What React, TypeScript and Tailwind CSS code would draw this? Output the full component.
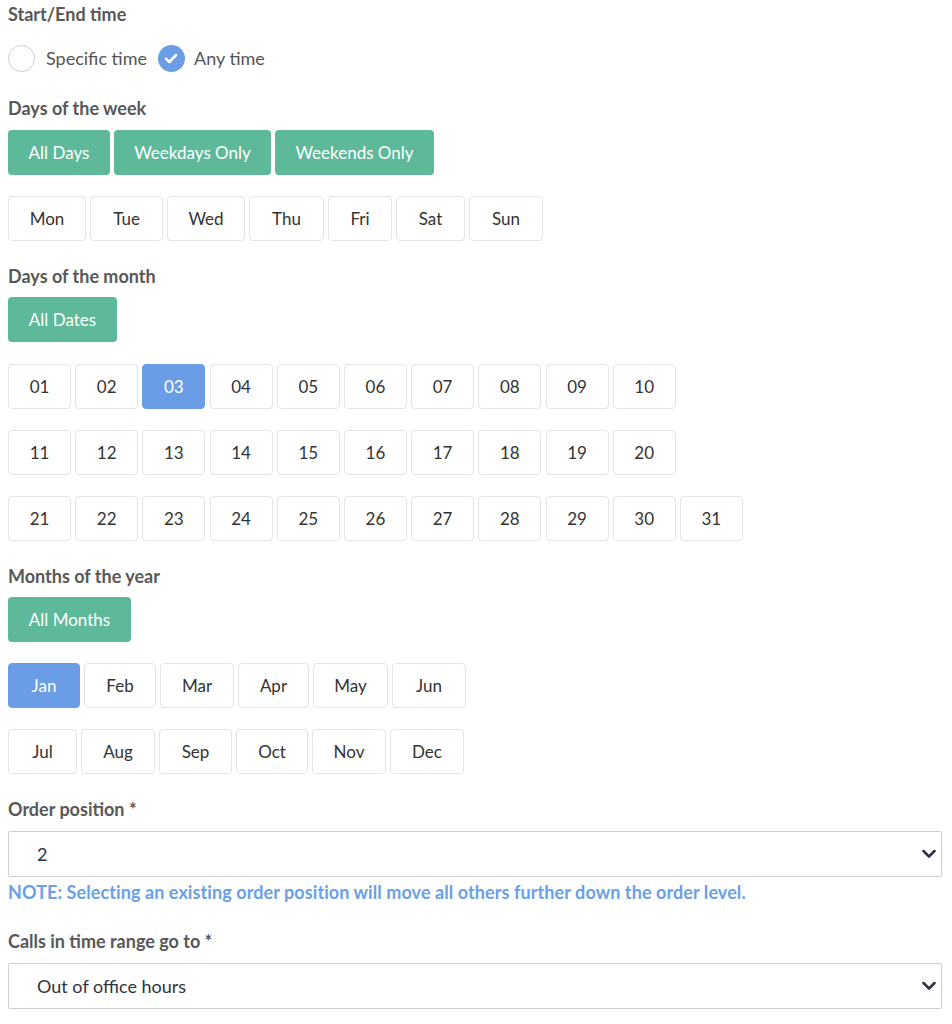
import React from "react";

const font = { fontFamily: '"Lato", "Noto Sans", sans-serif' };

function Label({ children, className = "" }: { children: React.ReactNode; className?: string }) {
  return (
    <div className={"h-6 leading-6 text-[18px] font-bold text-[#585858] whitespace-nowrap " + className}>
      {children}
    </div>
  );
}

function GreenBtn({ label, w }: { label: string; w: string }) {
  return (
    <div
      className={
        "h-[45px] flex items-center justify-center rounded-[4px] bg-[#5eb99a] text-white text-[17px] whitespace-nowrap " + w
      }
    >
      {label}
    </div>
  );
}

function Btn({ label, w, active = false }: { label: string; w: string; active?: boolean }) {
  return (
    <div
      className={
        "h-[45px] flex items-center justify-center rounded-[4px] border text-[17px] whitespace-nowrap " +
        w +
        (active
          ? " bg-[#6a9de6] border-[#6a9de6] text-white"
          : " bg-white border-[#e4e4e4] text-[#333333]")
      }
    >
      {label}
    </div>
  );
}

function Chevron() {
  return (
    <svg width="14" height="9" viewBox="0 0 14 9" className="absolute right-[5px] top-1/2 -translate-y-1/2">
      <path d="M1.5 1.5 L7 7 L12.5 1.5" fill="none" stroke="#2f3442" strokeWidth="2.6" strokeLinecap="round" strokeLinejoin="round" />
    </svg>
  );
}

function Select({ value, className = "" }: { value: string; className?: string }) {
  return (
    <div
      className={
        "relative h-[46px] w-full border border-[#cfcfcf] rounded-[2px] bg-white flex items-center pl-[28px] text-[18px] text-[#2f3442] " +
        className
      }
    >
      {value}
      <Chevron />
    </div>
  );
}

const weekDays: [string, string][] = [
  ["Mon", "w-[78px]"],
  ["Tue", "w-[73px]"],
  ["Wed", "w-[78px]"],
  ["Thu", "w-[75px]"],
  ["Fri", "w-[64px]"],
  ["Sat", "w-[69px]"],
  ["Sun", "w-[74px]"],
];

const months1: [string, string][] = [
  ["Jan", "w-[72px]"],
  ["Feb", "w-[72px]"],
  ["Mar", "w-[74px]"],
  ["Apr", "w-[71px]"],
  ["May", "w-[75px]"],
  ["Jun", "w-[74px]"],
];

const months2: [string, string][] = [
  ["Jul", "w-[69px]"],
  ["Aug", "w-[74px]"],
  ["Sep", "w-[73px]"],
  ["Oct", "w-[72px]"],
  ["Nov", "w-[74px]"],
  ["Dec", "w-[74px]"],
];

const pad = (n: number) => (n < 10 ? "0" + n : String(n));

export default function App() {
  const dateRows = [
    Array.from({ length: 10 }, (_, i) => i + 1),
    Array.from({ length: 10 }, (_, i) => i + 11),
    Array.from({ length: 11 }, (_, i) => i + 21),
  ];
  return (
    <div className="min-h-screen bg-white pl-2 pr-[10px] pt-[2px]" style={font}>
      <Label>Start/End time</Label>

      <div className="mt-[19px] h-[26px] flex items-center">
        <div className="w-[27px] h-[27px] rounded-full border-[1.5px] border-[#cfcfcf] bg-white" />
        <span className="ml-[11px] text-[18px] text-[#555555]">Specific time</span>
        <div className="ml-[11px] w-[27px] h-[27px] rounded-full bg-[#6a9de6] flex items-center justify-center">
          <svg width="14" height="11" viewBox="0 0 14 11">
            <path d="M2 5.8 L5.4 9 L12 2" fill="none" stroke="white" strokeWidth="2.6" strokeLinecap="round" strokeLinejoin="round" />
          </svg>
        </div>
        <span className="ml-[9px] text-[18px] text-[#555555]">Any time</span>
      </div>

      <Label className="mt-[25px]">Days of the week</Label>
      <div className="mt-[10px] flex gap-[4px]">
        <GreenBtn label="All Days" w="w-[102px]" />
        <GreenBtn label="Weekdays Only" w="w-[157px]" />
        <GreenBtn label="Weekends Only" w="w-[159px]" />
      </div>
      <div className="mt-[21px] flex gap-[4px]">
        {weekDays.map(([d, w]) => (
          <Btn key={d} label={d} w={w} />
        ))}
      </div>

      <Label className="mt-[23px]">Days of the month</Label>
      <div className="mt-[9px] flex">
        <GreenBtn label="All Dates" w="w-[109px]" />
      </div>
      <div className="mt-[22px] flex flex-col gap-[21px]">
        {dateRows.map((row, ri) => (
          <div key={ri} className="flex gap-[4.2px]">
            {row.map((n) => (
              <Btn key={n} label={pad(n)} w="w-[63px]" active={n === 3} />
            ))}
          </div>
        ))}
      </div>

      <Label className="mt-[23px]">Months of the year</Label>
      <div className="mt-[9px] flex">
        <GreenBtn label="All Months" w="w-[123px]" />
      </div>
      <div className="mt-[21px] flex gap-[4px]">
        {months1.map(([m, w]) => (
          <Btn key={m} label={m} w={w} active={m === "Jan"} />
        ))}
      </div>
      <div className="mt-[21px] flex gap-[4px]">
        {months2.map(([m, w]) => (
          <Btn key={m} label={m} w={w} />
        ))}
      </div>

      <Label className="mt-[23px]">Order position *</Label>
      <Select value="2" className="mt-[10px]" />
      <div className="mt-[3px] h-6 leading-6 text-[18px] font-bold tracking-[0.08px] text-[#6aa0e8] whitespace-nowrap">
        NOTE: Selecting an existing order position will move all others further down the order level.
      </div>

      <Label className="mt-[25px]">Calls in time range go to *</Label>
      <Select value="Out of office hours" className="mt-[10px]" />
    </div>
  );
}
